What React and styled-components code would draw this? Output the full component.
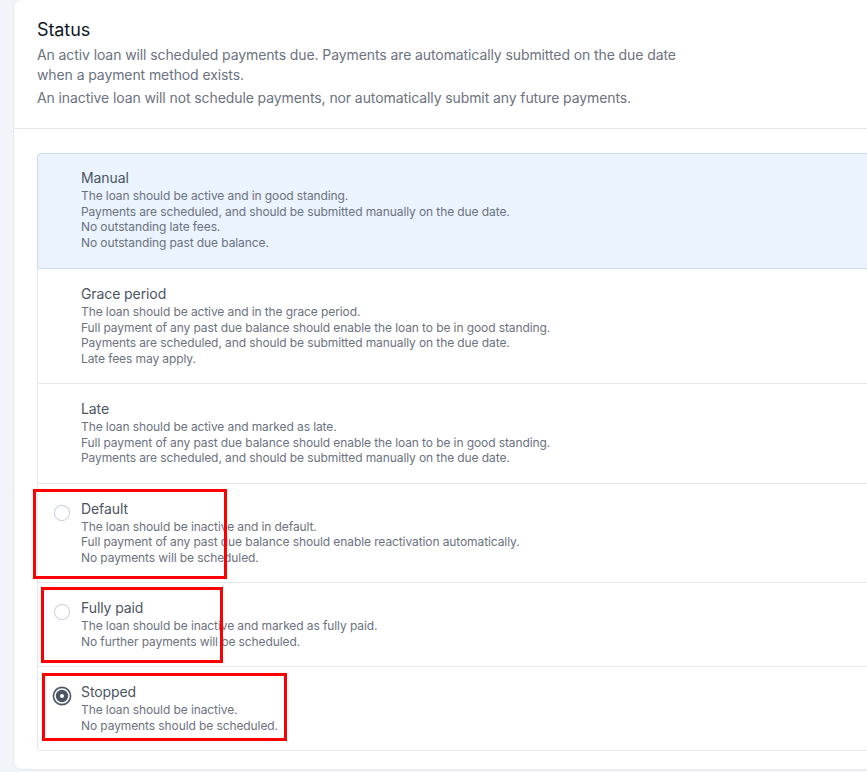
import React from "react";
import styled, { createGlobalStyle } from "styled-components";

const Global = createGlobalStyle`
  html, body { margin: 0; padding: 0; background: #f1f4f9; }
  body { font-family: Inter, "Noto Sans", Arial, sans-serif; overflow: hidden; letter-spacing: -0.006em; }
`;

const Page = styled.div`
  position: relative;
  width: 867px;
  height: 772px;
  overflow: hidden;
  padding-left: 13px;
  box-sizing: border-box;
`;

const Card = styled.section`
  width: 900px;
  background: #fff;
  border: 1px solid #e6e8ee;
  border-top: none;
  border-radius: 8px 0 8px 8px;
`;

const Header = styled.header`
  padding: 17px 23px 20px;
  border-bottom: 1px solid #e3e6ec;
`;

const Title = styled.h2`
  margin: 0 0 2px;
  font-size: 18px;
  line-height: 26px;
  font-weight: 400;
  color: #111827;
`;

const Desc = styled.p`
  margin: ${(p) => (p.$gap ? "3px" : "0")} 0 0;
  font-size: 14px;
  line-height: 20px;
  color: #6b7280;
  max-width: 650px;
`;

const Body = styled.div`
  padding: 24px 0 18px 23px;
`;

const List = styled.div`
  display: flex;
  flex-direction: column;
`;

const Item = styled.label`
  display: flex;
  gap: 11px;
  padding: ${(p) => (p.$pad ? "15px 16px 17px" : "14px 16px 18px")};
  background: ${(p) => (p.$highlight ? "#eaf3fe" : "#fff")};
  border: 1px solid ${(p) => (p.$highlight ? "#c9dcf3" : "#e5e7eb")};
  margin-top: -1px;
  position: relative;
  z-index: ${(p) => (p.$highlight ? 1 : 0)};
  &:first-child { border-radius: 4px 4px 0 0; margin-top: 0; }
  &:last-child { border-radius: 0 0 4px 4px; }
`;

const RadioSlot = styled.span`
  width: 16px;
  height: 28px;
  flex: 0 0 16px;
  display: flex;
  align-items: center;
  justify-content: center;
  visibility: ${(p) => (p.$hidden ? "hidden" : "visible")};
`;

const Text = styled.div`
  display: flex;
  flex-direction: column;
`;

const ItemTitle = styled.span`
  font-size: 14px;
  line-height: 20px;
  color: #4b5563;
  font-weight: 400;
`;

const ItemLine = styled.span`
  font-size: 12px;
  line-height: 15.5px;
  color: #6b7280;
`;

const Mark = styled.div`
  position: absolute;
  border: 3px solid #ff0000;
  box-sizing: border-box;
  pointer-events: none;
`;

const Radio = ({ checked }) =>
  checked ? (
    <svg width="20" height="20" viewBox="0 0 20 20" style={{ flex: "none" }}>
      <circle cx="10" cy="10" r="8.6" fill="none" stroke="#4b5563" strokeWidth="1.6" />
      <circle cx="10" cy="10" r="6.2" fill="#4b5563" />
      <circle cx="10" cy="10" r="2" fill="#fff" />
    </svg>
  ) : (
    <svg width="18" height="18" viewBox="0 0 18 18" style={{ flex: "none" }}>
      <circle cx="9" cy="9" r="7.6" fill="#fff" stroke="#cfd6e2" strokeWidth="1.2" />
    </svg>
  );

const items = [
  {
    title: "Manual",
    highlight: true,
    hideRadio: true,
    lines: [
      "The loan should be active and in good standing.",
      "Payments are scheduled, and should be submitted manually on the due date.",
      "No outstanding late fees.",
      "No outstanding past due balance.",
    ],
  },
  {
    title: "Grace period",
    hideRadio: true,
    pad: true,
    lines: [
      "The loan should be active and in the grace period.",
      "Full payment of any past due balance should enable the loan to be in good standing.",
      "Payments are scheduled, and should be submitted manually on the due date.",
      "Late fees may apply.",
    ],
  },
  {
    title: "Late",
    hideRadio: true,
    pad: true,
    lines: [
      "The loan should be active and marked as late.",
      "Full payment of any past due balance should enable the loan to be in good standing.",
      "Payments are scheduled, and should be submitted manually on the due date.",
    ],
  },
  {
    title: "Default",
    pad: true,
    lines: [
      "The loan should be inactive and in default.",
      "Full payment of any past due balance should enable reactivation automatically.",
      "No payments will be scheduled.",
    ],
  },
  {
    title: "Fully paid",
    pad: true,
    lines: [
      "The loan should be inactive and marked as fully paid.",
      "No further payments will be scheduled.",
    ],
  },
  {
    title: "Stopped",
    checked: true,
    pad: true,
    lines: ["The loan should be inactive.", "No payments should be scheduled."],
  },
];

export default function App() {
  return (
    <>
      <Global />
      <Page>
        <Card>
          <Header>
            <Title>Status</Title>
            <Desc>
              An activ loan will scheduled payments due. Payments are automatically submitted on the due date
              when a payment method exists.
            </Desc>
            <Desc $gap>
              An inactive loan will not schedule payments, nor automatically submit any future payments.
            </Desc>
          </Header>
          <Body>
            <List>
              {items.map((it) => (
                <Item key={it.title} $highlight={it.highlight} $pad={it.pad}>
                  <RadioSlot $hidden={it.hideRadio}>
                    <Radio checked={it.checked} />
                  </RadioSlot>
                  <Text>
                    <ItemTitle>{it.title}</ItemTitle>
                    {it.lines.map((l) => (
                      <ItemLine key={l}>{l}</ItemLine>
                    ))}
                  </Text>
                </Item>
              ))}
            </List>
          </Body>
        </Card>
        <Mark style={{ left: 33, top: 489, width: 194, height: 90 }} />
        <Mark style={{ left: 41, top: 587, width: 182, height: 76 }} />
        <Mark style={{ left: 42, top: 673, width: 245, height: 68 }} />
      </Page>
    </>
  );
}
